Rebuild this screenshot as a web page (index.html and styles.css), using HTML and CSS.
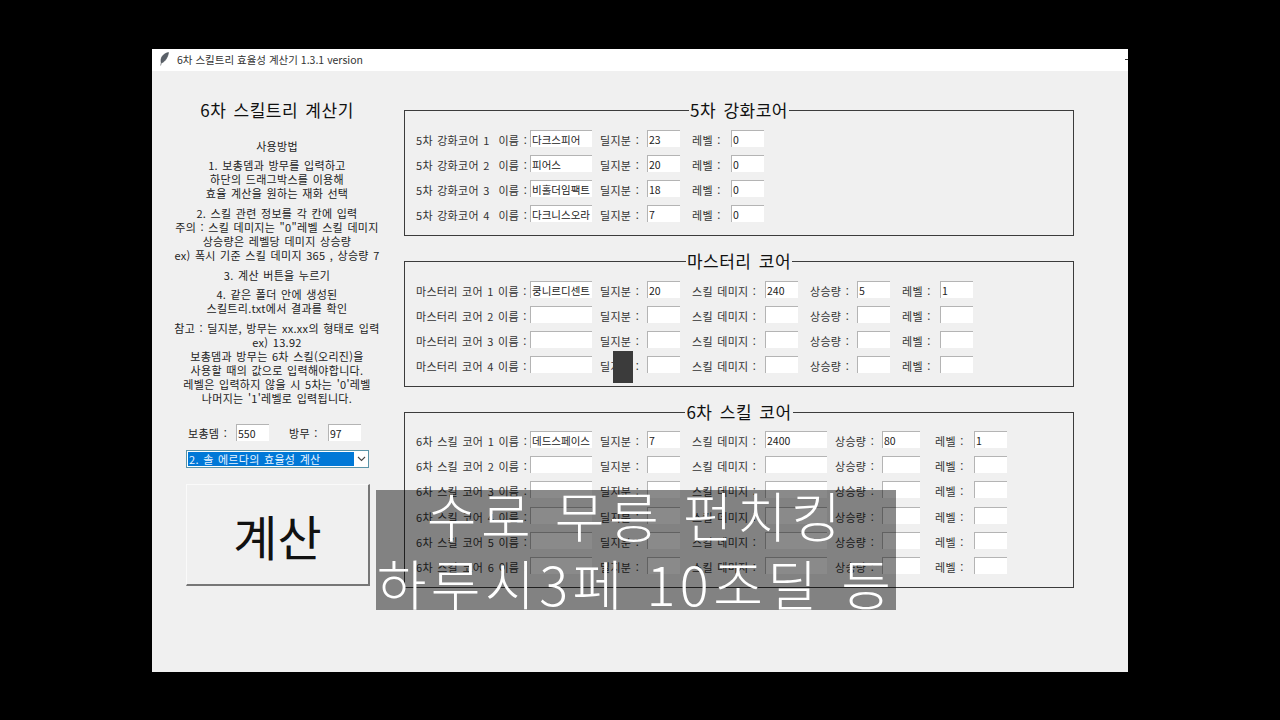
FILE: index.html
```html
<!DOCTYPE html>
<html lang="ko">
<head>
<meta charset="utf-8">
<title>6차 스킬트리 효율성 계산기</title>
<link rel="stylesheet" href="styles.css">
</head>
<body>
<div class="window">
  <div class="titlebar">
    <svg class="feather" width="9" height="14" viewBox="0 0 9 14"><path d="M8.500 .5C5 1 1.600 3.600 1 7.500c-.2 1.400 0 2.600.4 3.500C5 10 8 5 8.500 .5zM1.400 10.500L.6 13.500" fill="#5a6068" stroke="#4a5058" stroke-width=".6"/></svg>
    <span class="title-text">6차 스킬트리 효율성 계산기 1.3.1 version</span>
    <span class="minimize"></span>
  </div>
  <div class="content">
    <div class="left">
      <h1 class="heading">6차 스킬트리 계산기</h1>
      <p class="para first">사용방법</p>
      <p class="para near">1. 보총뎀과 방무를 입력하고<br>하단의 드래그박스를 이용해<br>효율 계산을 원하는 재화 선택</p>
      <p class="para">2. 스킬 관련 정보를 각 칸에 입력<br>주의 : 스킬 데미지는 "0"레벨 스킬 데미지<br>상승량은 레벨당 데미지 상승량<br>ex) 폭시 기준 스킬 데미지 365 , 상승량 7</p>
      <p class="para">3. 계산 버튼을 누르기</p>
      <p class="para near">4. 같은 폴더 안에 생성된<br>스킬트리.txt에서 결과를 확인</p>
      <p class="para">참고 : 딜지분, 방무는 xx.xx의 형태로 입력<br>ex) 13.92<br>보총뎀과 방무는 6차 스킬(오리진)을<br>사용할 때의 값으로 입력해야합니다.<br>레벨은 입력하지 않을 시 5차는 '0'레벨<br>나머지는 '1'레벨로 입력됩니다.</p>
      <div class="stats">
        <span class="stat-a">보총뎀 :</span><input class="field" value="550">
        <span class="stat-b">방무 :</span><input class="field" value="97">
      </div>
      <div class="combo">
        <span class="combo-value">2. 솔 에르다의 효율성 계산</span>
        <svg class="chevron" width="9" height="6" viewBox="0 0 9 6"><path d="M1 1l3.500 3.500L8 1" fill="none" stroke="#444" stroke-width="1.100"/></svg>
      </div>
      <button class="calc">계산</button>
    </div>
    <div class="right">
      <fieldset class="group">
        <legend>5차 강화코어</legend>
        <div class="row cols-five"><span class="lbl split"><span>5차 강화코어 1</span><span>이름 :</span></span><input class="field" value="다크스피어"><span class="lbl p8">딜지분 :</span><input class="field" value="23"><span class="lbl p12">레벨 :</span><input class="field" value="0"></div>
        <div class="row cols-five"><span class="lbl split"><span>5차 강화코어 2</span><span>이름 :</span></span><input class="field" value="피어스"><span class="lbl p8">딜지분 :</span><input class="field" value="20"><span class="lbl p12">레벨 :</span><input class="field" value="0"></div>
        <div class="row cols-five"><span class="lbl split"><span>5차 강화코어 3</span><span>이름 :</span></span><input class="field" value="비홀더임팩트"><span class="lbl p8">딜지분 :</span><input class="field" value="18"><span class="lbl p12">레벨 :</span><input class="field" value="0"></div>
        <div class="row cols-five"><span class="lbl split"><span>5차 강화코어 4</span><span>이름 :</span></span><input class="field" value="다크니스오라"><span class="lbl p8">딜지분 :</span><input class="field" value="7"><span class="lbl p12">레벨 :</span><input class="field" value="0"></div>
      </fieldset>
      <fieldset class="group">
        <legend>마스터리 코어</legend>
        <div class="row cols-master"><span class="lbl">마스터리 코어 1 이름 :</span><input class="field" value="쿵니르디센트"><span class="lbl p8">딜지분 :</span><input class="field" value="20"><span class="lbl p12">스킬 데미지 :</span><input class="field" value="240"><span class="lbl p12">상승량 :</span><input class="field" value="5"><span class="lbl p12">레벨 :</span><input class="field" value="1"></div>
        <div class="row cols-master"><span class="lbl">마스터리 코어 2 이름 :</span><input class="field"><span class="lbl p8">딜지분 :</span><input class="field"><span class="lbl p12">스킬 데미지 :</span><input class="field"><span class="lbl p12">상승량 :</span><input class="field"><span class="lbl p12">레벨 :</span><input class="field"></div>
        <div class="row cols-master"><span class="lbl">마스터리 코어 3 이름 :</span><input class="field"><span class="lbl p8">딜지분 :</span><input class="field"><span class="lbl p12">스킬 데미지 :</span><input class="field"><span class="lbl p12">상승량 :</span><input class="field"><span class="lbl p12">레벨 :</span><input class="field"></div>
        <div class="row cols-master"><span class="lbl">마스터리 코어 4 이름 :</span><input class="field"><span class="lbl p8">딜지분 :</span><input class="field"><span class="lbl p12">스킬 데미지 :</span><input class="field"><span class="lbl p12">상승량 :</span><input class="field"><span class="lbl p12">레벨 :</span><input class="field"></div>
      </fieldset>
      <fieldset class="group tight">
        <legend>6차 스킬 코어</legend>
        <div class="row cols-six"><span class="lbl">6차 스킬 코어 1 이름 :</span><input class="field" value="데드스페이스"><span class="lbl p8">딜지분 :</span><input class="field" value="7"><span class="lbl p12">스킬 데미지 :</span><input class="field" value="2400"><span class="lbl p8">상승량 :</span><input class="field" value="80"><span class="lbl p15">레벨 :</span><input class="field" value="1"></div>
        <div class="row cols-six"><span class="lbl">6차 스킬 코어 2 이름 :</span><input class="field"><span class="lbl p8">딜지분 :</span><input class="field"><span class="lbl p12">스킬 데미지 :</span><input class="field"><span class="lbl p8">상승량 :</span><input class="field"><span class="lbl p15">레벨 :</span><input class="field"></div>
        <div class="row cols-six"><span class="lbl">6차 스킬 코어 3 이름 :</span><input class="field"><span class="lbl p8">딜지분 :</span><input class="field"><span class="lbl p12">스킬 데미지 :</span><input class="field"><span class="lbl p8">상승량 :</span><input class="field"><span class="lbl p15">레벨 :</span><input class="field"></div>
        <div class="row cols-six"><span class="lbl">6차 스킬 코어 4 이름 :</span><input class="field"><span class="lbl p8">딜지분 :</span><input class="field"><span class="lbl p12">스킬 데미지 :</span><input class="field"><span class="lbl p8">상승량 :</span><input class="field"><span class="lbl p15">레벨 :</span><input class="field"></div>
        <div class="row cols-six"><span class="lbl">6차 스킬 코어 5 이름 :</span><input class="field"><span class="lbl p8">딜지분 :</span><input class="field"><span class="lbl p12">스킬 데미지 :</span><input class="field"><span class="lbl p8">상승량 :</span><input class="field"><span class="lbl p15">레벨 :</span><input class="field"></div>
        <div class="row cols-six"><span class="lbl">6차 스킬 코어 6 이름 :</span><input class="field"><span class="lbl p8">딜지분 :</span><input class="field"><span class="lbl p12">스킬 데미지 :</span><input class="field"><span class="lbl p8">상승량 :</span><input class="field"><span class="lbl p15">레벨 :</span><input class="field"></div>
      </fieldset>
    </div>
  </div>
  <div class="cursor-block"></div>
  <div class="caption">
    <div class="caption-line one">수로 무릉 펀치킹</div>
    <div class="caption-line two">하루시3페 10조딜 등</div>
  </div>
</div>
</body>
</html>
```
FILE: styles.css
```css
* { box-sizing: border-box; }
html, body { margin: 0; height: 100%; }
body {
  background: #000;
  padding-top: 49px;
  font-family: "Noto Sans CJK KR", "Noto Sans", sans-serif;
  color: #222;
  overflow: hidden;
}
.window {
  position: relative;
  width: 976px;
  height: 623px;
  margin: 0 auto;
  background: #f0f0f0;
  display: flex;
  flex-direction: column;
}
.titlebar {
  height: 22px;
  background: #fff;
  display: flex;
  align-items: center;
  padding: 0 0 2px 8px;
  flex: none;
}
.feather { flex: none; }
.title-text {
  margin-left: 8px;
  font-size: 10.500px;
  color: #333;
  flex: 1;
}
.minimize { width: 3px; height: 1px; background: #333; }
.content { display: flex; flex: 1; }
.left {
  width: 250px;
  margin-right: 2px;
  padding-top: 27px;
  display: flex;
  flex-direction: column;
  align-items: center;
  flex: none;
}
.heading {
  margin: 0;
  font-size: 17px;
  font-weight: 400;
  line-height: 24px;
  letter-spacing: .5px;
  word-spacing: 2px;
  color: #111;
}
.para {
  margin: 6px 0 0;
  font-size: 11px;
  line-height: 14px;
  letter-spacing: .3px;
  word-spacing: 1px;
  text-align: center;
  white-space: nowrap;
}
.para.first { margin-top: 17px; }
.para.near { margin-top: 5px; }
.stats {
  align-self: flex-start;
  margin: 19px 0 0 36px;
  display: flex;
  align-items: center;
  font-size: 11px;
  letter-spacing: .3px;
  word-spacing: 1px;
  height: 17px;
}
.stat-a { width: 48px; }
.stat-b { width: 39px; margin-left: 20px; }
.stats .field { width: 33px; }
.combo {
  align-self: flex-start;
  margin: 9px 0 0 34px;
  width: 183px;
  height: 18px;
  border: 1px solid #5a94a8;
  background: #fff;
  display: flex;
  align-items: center;
  padding: 1px;
}
.combo-value {
  width: 166px;
  height: 100%;
  background: #0078d7;
  color: #e8f4ff;
  font-size: 11px;
  letter-spacing: .3px;
  word-spacing: 1px;
  line-height: 14px;
  padding-left: 1px;
  white-space: nowrap;
}
.chevron { margin-left: 3px; }
.calc {
  align-self: flex-start;
  margin: 16px 0 0 34px;
  width: 184px;
  height: 102px;
  padding: 0;
  background: #f0f0f0;
  border-style: solid;
  border-width: 1px 2px 2px 1px;
  border-color: #fafafa #777 #777 #fafafa;
  font-family: inherit;
  font-size: 48px;
  color: #111;
}
.right { width: 670px; padding-top: 29px; flex: none; }
.group {
  margin: 0 0 15px;
  padding: 10px 11px 5px;
  border: 1px solid #3c3c3c;
  min-width: 0;
}
.group.tight { padding-top: 9px; padding-bottom: 5px; }
.group legend {
  margin: 0 auto;
  padding: 0 1px;
  font-size: 17px;
  line-height: 20px;
  letter-spacing: .5px;
  word-spacing: 2px;
  color: #111;
}
.row {
  display: grid;
  height: 25px;
  align-items: start;
  font-size: 11px;
  letter-spacing: .3px;
  word-spacing: 1px;
}
.cols-five { grid-template-columns: 114px 62px 55px 33px 51px 33px; }
.cols-master { grid-template-columns: 114px 62px 55px 33px 85px 33px 59px 33px 50px 33px; }
.cols-six { grid-template-columns: 114px 62px 55px 33px 85px 62px 55px 38px 54px 33px; height: 25.200px; }
.lbl {
  line-height: 20px;
  white-space: nowrap;
  color: #333;
}
.lbl.split { display: flex; justify-content: space-between; padding-right: 3px; }
.p8 { padding-left: 8px; }
.p12 { padding-left: 12px; }
.p15 { padding-left: 15px; }
.field {
  width: 100%;
  height: 17px;
  margin: 0;
  padding: 0 1px;
  background: #fff;
  border-style: solid;
  border-width: 1px 0 0 1px;
  border-color: #b4b4b4;
  border-radius: 0;
  outline: none;
  font-family: inherit;
  font-size: 10.500px;
  letter-spacing: 0;
  color: #222;
}
.cursor-block {
  position: absolute;
  left: 461px;
  top: 302px;
  width: 20px;
  height: 32px;
  background: #3b3b3b;
}
.caption {
  position: absolute;
  left: 224px;
  top: 441px;
  width: 520px;
  height: 120px;
  background: rgba(0, 0, 0, .46);
  color: #fff;
  font-weight: 300;
  text-align: center;
  white-space: nowrap;
}
.caption-line { height: 60px; font-size: 54px; }
.caption-line.one { line-height: 50px; letter-spacing: 4.500px; }
.caption-line.two { line-height: 66px; letter-spacing: 4.500px; }
```
